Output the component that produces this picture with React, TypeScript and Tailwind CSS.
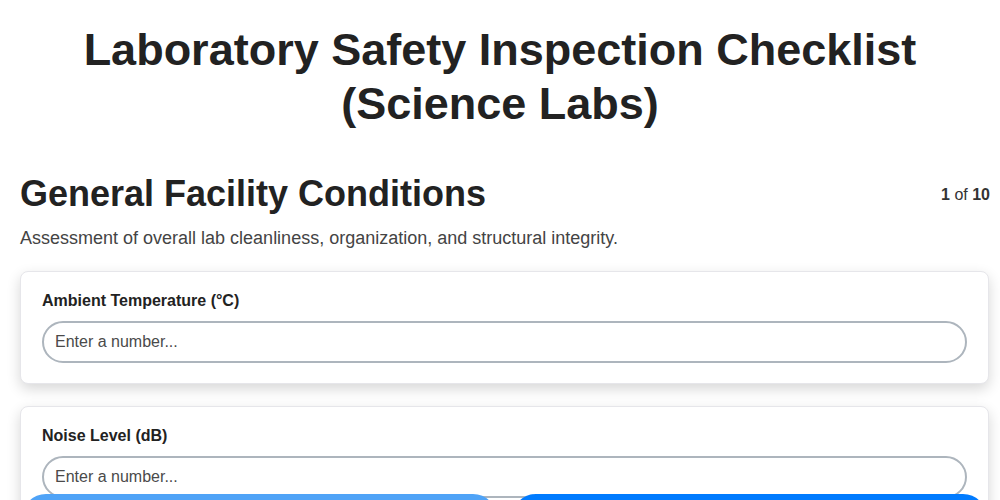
const fields = [
  { label: "Ambient Temperature (°C)" },
  { label: "Noise Level (dB)" },
  { label: "Relative Humidity (%)" },
];

const FieldCard = ({ label }: { label: string }) => (
  <div className="rounded-lg border border-[#e6e6ea] bg-white px-[21px] pt-[19px] pb-[20px] shadow-[0_5px_14px_rgba(0,0,0,0.16)]">
    <label className="mb-[10px] block text-[16px] font-bold leading-[20px] text-[#222]">
      {label}
    </label>
    <input
      className="block h-[42px] w-full rounded-[21px] border-2 border-[#adb5bd] bg-white px-[11px] text-[16px] text-[#333] outline-none placeholder:text-[#4a4a4a]"
      placeholder="Enter a number..."
      type="text"
    />
  </div>
);

export default function App() {
  return (
    <div className="min-h-screen bg-white font-['Liberation_Sans',Arial,sans-serif] text-[#222]">
      <h1 className="px-5 pt-[23px] text-center text-[45px] font-bold leading-[54px] text-[#222]">
        Laboratory Safety Inspection Checklist
        <br />
        (Science Labs)
      </h1>

      <div className="pl-5 pr-[10px] pt-[41px]">
        <div className="flex items-start justify-between">
          <h2 className="text-[36px] font-bold leading-[44px] text-[#222]">
            General Facility Conditions
          </h2>
          <span className="pt-[11px] text-[16px] text-[#333]">
            <b>1</b> of <b>10</b>
          </span>
        </div>
        <p className="mt-[10px] text-[18px] leading-[24px] text-[#444]">
          Assessment of overall lab cleanliness, organization, and structural
          integrity.
        </p>

        <div className="mt-[21px] flex flex-col gap-[22px] pr-px pb-[80px]">
          {fields.map((f) => (
            <FieldCard key={f.label} label={f.label} />
          ))}
        </div>
      </div>

      <div className="fixed right-0 bottom-0 left-0 flex gap-[15px] pr-[13px] pl-[22px]">
        <button
          className="h-[48px] flex-1 translate-y-[42px] rounded-[24px] bg-[#4fa3f7] text-[16px] font-bold text-white"
          type="button"
        >
          Previous
        </button>
        <button
          className="h-[48px] flex-1 translate-y-[42px] rounded-[24px] bg-[#007bff] text-[16px] font-bold text-white"
          type="button"
        >
          Next
        </button>
      </div>
    </div>
  );
}
